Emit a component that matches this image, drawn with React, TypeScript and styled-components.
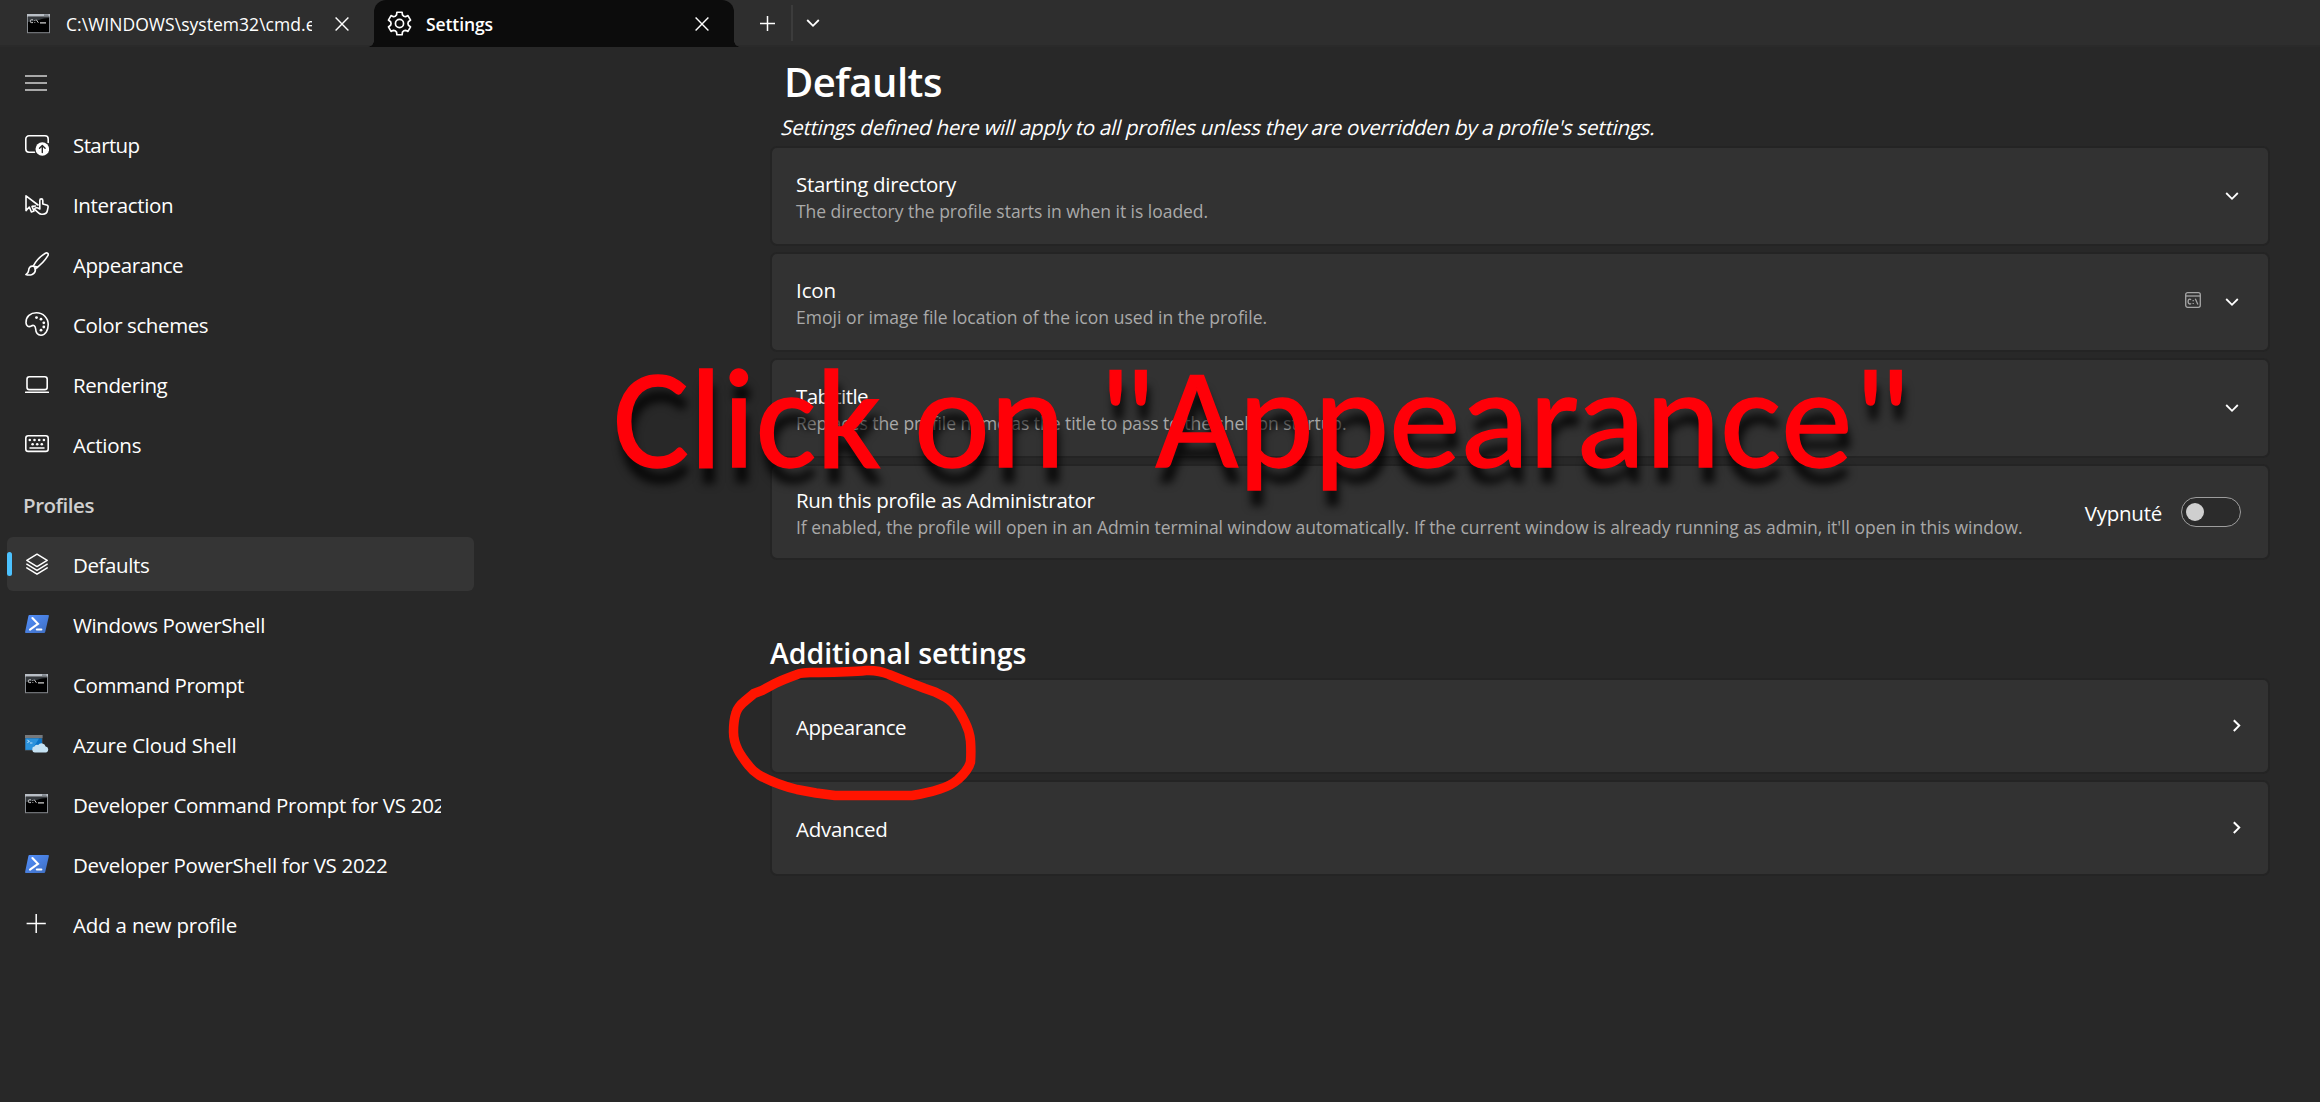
import React from "react";
import styled, { createGlobalStyle } from "styled-components";

const GlobalStyle = createGlobalStyle`
  * { box-sizing: border-box; }
  body {
    margin: 0;
    background: #282828;
    color: #ffffff;
    font-family: "Segoe UI", "Open Sans", "Noto Sans", sans-serif;
    overflow: hidden;
  }
  svg { display: block; flex: none; }
`;

const Window = styled.div`
  position: relative;
  display: flex;
  flex-direction: column;
  height: 1102px;
  background: #282828;
  overflow: hidden;
`;

/* ---------- title bar ---------- */

const TitleBar = styled.header`
  display: flex;
  height: 47px;
  background: #2e2e2e;
  border-bottom: 2px solid #2a2a2a;
`;

const Tab = styled.div<{ $active?: boolean }>`
  display: flex;
  align-items: center;
  height: 47px;
  width: ${(p) => (p.$active ? 360 : 374)}px;
  padding: 0 ${(p) => (p.$active ? "25px 0 13px" : "25px 0 27px")};
  border-radius: 12px 12px 0 0;
  background: ${(p) => (p.$active ? "#0c0c0c" : "transparent")};
  position: relative;
  &::before, &::after {
    content: "";
    display: ${(p) => (p.$active ? "block" : "none")};
    position: absolute;
    bottom: 0;
    width: 6px;
    height: 6px;
  }
  &::before { left: -6px; background: radial-gradient(circle at 0 0, transparent 5.5px, #0c0c0c 6px); }
  &::after { right: -6px; background: radial-gradient(circle at 100% 0, transparent 5.5px, #0c0c0c 6px); }
`;

const TabTitle = styled.span<{ $active?: boolean }>`
  flex: none;
  width: 246px;
  margin-left: ${(p) => (p.$active ? 14 : 15)}px;
  margin-right: 23px;
  padding-top: ${(p) => (p.$active ? 0 : 1)}px;
  overflow: hidden;
  white-space: nowrap;
  font-size: 17.5px;
  line-height: 30px;
  letter-spacing: ${(p) => (p.$active ? -0.1 : 0.036)}px;
  font-weight: ${(p) => (p.$active ? 600 : 400)};
`;

const TabActions = styled.div`
  display: flex;
  align-items: center;
  height: 46px;
  padding-left: 26px;
`;

const TabDivider = styled.span`
  width: 2px;
  height: 36px;
  margin: 0 11px 0 16px;
  background: #3c3c3c;
`;

/* ---------- layout ---------- */

const Body = styled.div`
  display: flex;
  flex: 1;
  min-height: 0;
`;

const Sidebar = styled.nav`
  display: flex;
  flex-direction: column;
  width: 770px;
  flex: none;
  padding: 9px 0 0 7px;
`;

const MenuButton = styled.div`
  display: flex;
  align-items: center;
  height: 54px;
  padding-left: 18px;
  margin-bottom: 7px;
`;

const NavItem = styled.div<{ $selected?: boolean }>`
  display: flex;
  align-items: center;
  position: relative;
  width: 467px;
  height: 54px;
  margin-bottom: 6px;
  padding-left: 18px;
  border-radius: 6px;
  background: ${(p) => (p.$selected ? "#353535" : "transparent")};
  &::before {
    content: "";
    display: ${(p) => (p.$selected ? "block" : "none")};
    position: absolute;
    left: 0;
    top: 15px;
    width: 5px;
    height: 24px;
    border-radius: 3px;
    background: #4cc2ff;
  }
`;

const NavLabel = styled.span<{ $ls: number }>`
  width: 368px;
  margin-left: 24px;
  padding-top: 2px;
  overflow: hidden;
  white-space: nowrap;
  font-size: 20.5px;
  line-height: 34px;
  letter-spacing: ${(p) => p.$ls}px;
`;

const NavHeading = styled.div`
  height: 54px;
  margin-bottom: 6px;
  padding: 1px 0 0 16px;
  color: #cfcfcf;
  font-size: 20.5px;
  font-weight: 600;
  line-height: 54px;
  letter-spacing: -0.45px;
`;

const Main = styled.main`
  width: 1500px;
  padding-top: 7px;
`;

const PageTitle = styled.h1`
  height: 54px;
  margin: 0;
  padding: 1px 0 0 14px;
  font-size: 40px;
  font-weight: 600;
  line-height: 54px;
  letter-spacing: -0.5px;
`;

const Subtitle = styled.p`
  width: max-content;
  margin: 0;
  padding-left: 12px;
  font-size: 20.5px;
  line-height: 38px;
  letter-spacing: -0.25px;
  white-space: nowrap;
  transform: skewX(-14deg);
`;

const SectionTitle = styled.h2`
  margin: 73px 0 5px;
  font-size: 28.5px;
  font-weight: 600;
  line-height: 40px;
  letter-spacing: -0.06px;
`;

const CardList = styled.section`
  display: flex;
  flex-direction: column;
  gap: 6px;
`;

const Card = styled.div<{ $h: number }>`
  display: flex;
  align-items: center;
  height: ${(p) => p.$h}px;
  padding: 0 27px 0 24px;
  border: 2px solid #242424;
  border-radius: 7px;
  background: #323232;
`;

const CardText = styled.div<{ $single?: boolean }>`
  flex: 1;
  padding-top: ${(p) => (p.$single ? 2 : 0)}px;
  white-space: nowrap;
`;

const CardTitle = styled.div<{ $ls: number }>`
  font-size: 20.5px;
  line-height: 30px;
  letter-spacing: ${(p) => p.$ls}px;
`;

const CardDescription = styled.div<{ $ls: number }>`
  color: #a9a9a9;
  font-size: 17.5px;
  line-height: 24px;
  letter-spacing: ${(p) => p.$ls}px;
`;

const CardTrailing = styled.div`
  display: flex;
  align-items: center;
  gap: 22px;
`;

const RaisedIcon = styled.span`
  padding-bottom: 4px;
`;

const ToggleLabel = styled.span`
  font-size: 20.5px;
  line-height: 30px;
  letter-spacing: -0.25px;
  padding-top: 2px;
  margin-right: -3px;
`;

const Toggle = styled.span`
  display: flex;
  align-items: center;
  width: 60px;
  height: 30px;
  padding-left: 4px;
  border: 1.5px solid #9d9d9d;
  border-radius: 15px;
  background: #2b2b2b;
`;

const ToggleKnob = styled.span`
  width: 18px;
  height: 18px;
  border-radius: 50%;
  background: #cfcfcf;
`;

/* ---------- annotations drawn over the window ---------- */

const Callout = styled.div`
  position: absolute;
  left: 613px;
  top: 338px;
  color: #ff0008;
  font-family: Calibri, Carlito, Lato, sans-serif;
  font-size: 143px;
  line-height: 160px;
  letter-spacing: 0.25px;
  white-space: nowrap;
  -webkit-text-stroke: 1.5px #ff0008;
  text-shadow: 3px 16px 8px rgba(0, 0, 0, 0.8);
`;

const Circle = styled.svg`
  position: absolute;
  left: 720px;
  top: 655px;
`;

/* ---------- icons ---------- */

const CloseIcon = () => (
  <svg width="14" height="14" viewBox="0 0 14 14" fill="none" stroke="#fff" strokeWidth="1.4">
    <path d="M.6.6 13.4 13.4M13.4.6.6 13.4" />
  </svg>
);

const PlusIcon = () => (
  <svg width="15" height="15" viewBox="0 0 15 15" stroke="#fff" strokeWidth="1.5">
    <path d="M7.5 0V15M0 7.5H15" />
  </svg>
);

const ChevronDown = () => (
  <svg width="18" height="18" viewBox="0 0 18 18" fill="none" stroke="#fff" strokeWidth="1.8">
    <path d="M3.2 6 9 11.8 14.8 6" />
  </svg>
);

const ChevronRight = () => (
  <svg width="18" height="18" viewBox="0 0 18 18" fill="none" stroke="#fff" strokeWidth="2">
    <path d="M10.8 3.2 16.2 8.6 10.8 14" />
  </svg>
);

const gearPath = (() => {
  const pts: string[] = [];
  const at = (deg: number, r: number) => {
    const a = (deg * Math.PI) / 180;
    return `${(12 + r * Math.cos(a)).toFixed(2)} ${(12 + r * Math.sin(a)).toFixed(2)}`;
  };
  for (let k = 0; k < 6; k++) {
    const c = -90 + k * 60;
    pts.push(at(c - 19, 8.7), at(c - 13, 11.1), at(c + 13, 11.1), at(c + 19, 8.7), at(c + 30, 8.1));
  }
  return `M${pts.join("L")}Z`;
})();

const GearIcon = () => (
  <svg width="25" height="25" viewBox="0 0 24 24" fill="none" stroke="#fff" strokeWidth="1.6" strokeLinejoin="round">
    <path d={gearPath} />
    <circle cx="12" cy="12" r="3.9" />
  </svg>
);

const HamburgerIcon = () => (
  <svg width="24" height="24" viewBox="0 0 24 24" stroke="#d2d2d2" strokeWidth="1.5">
    <path d="M0 5H22M0 12.1H22M0 19H22" />
  </svg>
);

const Glyph = ({ children }: { children: React.ReactNode }) => (
  <svg width="24" height="24" viewBox="0 0 24 24" fill="none" stroke="#fff" strokeWidth="1.6" strokeLinejoin="round" strokeLinecap="round">
    {children}
  </svg>
);

const StartupIcon = () => (
  <Glyph>
    <path d="M9.5 20.2H4A3.2 3.2 0 0 1 .8 17V7A3.2 3.2 0 0 1 4 3.8H20A3.2 3.2 0 0 1 23.2 7V10.5" />
    <circle cx="17.3" cy="17" r="6.8" fill="#fff" stroke="none" />
    <path d="M17.3 20.6V13.6M14.5 16.3 17.3 13.5 20.1 16.3" stroke="#282828" strokeWidth="1.4" />
  </Glyph>
);

const InteractionIcon = () => (
  <Glyph>
    <path d="M13 13 1 3.8V18.6L4.3 15 6.4 20 9 19 7 14.4 10.5 14" />
    <path d="M14.8 14.4V8.4A1.5 1.5 0 0 1 17.8 8.4V11.9L21.6 13A1.8 1.8 0 0 1 23.1 15.1L22.4 18.5A4.6 4.6 0 0 1 17.8 22.2H16.4A4 4 0 0 1 13.8 21.2L9.6 17.4C9.6 15.4 11.8 15 14.8 17Z" />
  </Glyph>
);

const BrushIcon = () => (
  <Glyph>
    <path d="M8.2 14.2C10.5 9.6 15.6 4.2 20.4 1.2 22.2.2 24 1.8 22.9 3.6 20 8.4 14.6 13.8 10 17" />
    <path d="M8.2 14.2C5 13.8 3.8 16 3.6 18.6 3.5 20.4 2.4 21.6.9 22.6 4.8 23.8 10.6 22.6 10.4 17.4 10.3 15.6 9.4 14.4 8.2 14.2ZM8.6 14.2Q12 14.4 12.4 15.4" />
  </Glyph>
);

const PaletteIcon = () => (
  <Glyph>
    <path d="M1 10.6C.8 4.6 5.6.8 11.4.8 18.2.8 23.2 6 23.2 12.4 23.2 18 20.6 23.2 16 23.2 12.2 23.2 10.8 20 10.6 16.8 10.4 13.6 8.4 12.6 6.2 14 3.4 15.6 1.1 13.6 1 10.6Z" />
    <g fill="#fff" stroke="none">
      <circle cx="11.5" cy="5.6" r="1.4" />
      <circle cx="16" cy="7.2" r="1.4" />
      <circle cx="18.8" cy="10.8" r="1.4" />
      <circle cx="18.8" cy="15" r="1.4" />
      <circle cx="16" cy="18.2" r="1.4" />
    </g>
  </Glyph>
);

const LaptopIcon = () => (
  <Glyph>
    <rect x="2" y="4.8" width="20.2" height="12.8" rx="2.4" />
    <path d="M.6 20.3H23.4" />
  </Glyph>
);

const KeyboardIcon = () => (
  <Glyph>
    <rect x=".8" y="3.8" width="22.4" height="15.6" rx="2.4" />
    <path d="M5 16H19" strokeWidth="1.5" />
    <g fill="#fff" stroke="none">
      {[4.8, 9.5, 14.2, 18.9].map((x) => <circle key={x} cx={x} cy="8" r="1.3" />)}
      {[7.6, 12.2, 16.8].map((x) => <circle key={x} cx={x} cy="12.2" r="1.3" />)}
    </g>
  </Glyph>
);

const LayersIcon = () => (
  <Glyph>
    <path d="M12 2.2 22.2 8.4 12 14.6 1.8 8.4Z" strokeWidth="1.5" />
    <path d="M1.8 12.2 12 18.4 22.2 12.2M1.8 15.8 12 22.2 22.2 15.8" strokeWidth="1.5" />
  </Glyph>
);

const AddIcon = () => (
  <Glyph>
    <path d="M11.2 1.9V21.1M1.6 11.5H20.8" strokeWidth="1.5" strokeLinecap="butt" />
  </Glyph>
);

const PowerShellIcon = () => (
  <svg width="24" height="24" viewBox="0 0 24 24" fill="none">
    <defs>
      <linearGradient id="ps" x1="0" y1="0" x2="1" y2="1">
        <stop offset="0" stopColor="#5391fe" />
        <stop offset="1" stopColor="#3e6dbf" />
      </linearGradient>
    </defs>
    <path d="M4.4 3H23a.9.9 0 0 1 .9 1.1L20.2 20a1.3 1.3 0 0 1-1.2 1H1A.9.9 0 0 1 .1 19.9L3.4 3.9A1.2 1.2 0 0 1 4.4 3Z" fill="url(#ps)" />
    <path d="M7.4 6 13 11.8 5 17.6" stroke="#fff" strokeWidth="2.1" strokeLinecap="round" />
    <path d="M11.8 17.6H16.4" stroke="#fff" strokeWidth="2" strokeLinecap="round" />
  </svg>
);

const CmdIcon = () => (
  <svg width="24" height="24" viewBox="0 0 24 24" fill="none">
    <rect x=".5" y="2.5" width="22" height="18.2" fill="#000" stroke="#85898e" />
    <path d="M1 9V5H22V6C14 6 12 9 1 10Z" fill="#34383c" />
    <rect x="0" y="2" width="23" height="2.6" fill="#b9bfc6" />
    <rect x="17" y="2.6" width="4.5" height="1" fill="#5a6068" />
    <path d="M6 7.8H4.2Q3.4 7.8 3.4 8.6V9.8Q3.4 10.6 4.2 10.6H6M7.8 8V8.8M7.8 10V10.8M9.2 7.6 11.4 10.8" stroke="#c8c8c8" strokeWidth="1" />
    <path d="M13 10.9H19" stroke="#f0f0f0" strokeWidth="1.1" />
  </svg>
);

const AzureIcon = () => (
  <svg width="24" height="24" viewBox="0 0 24 24" fill="none">
    <rect x="0" y="3" width="17.5" height="15.5" fill="#4d5a66" />
    <rect x=".6" y="6.4" width="16.3" height="11.4" fill="#0a74c8" />
    <path d="M.6 6.4H14L7 17.8H.6Z" fill="#2b93dd" />
    <rect x="0" y="3" width="17.5" height="3" fill="#77797c" />
    <path d="M2.4 8.2 4.4 9.4 2.4 10.6M5 11H7.4" stroke="#cfe8fb" strokeWidth=".9" />
    <path d="M9.8 20.4A3.1 3.1 0 0 1 9.6 14.3 3 3 0 0 1 13.2 13.1 4.1 4.1 0 0 1 20.6 14.6 3 3 0 0 1 21.3 20.4Z" fill="#c5e2f3" />
  </svg>
);

const ConsoleIcon = () => (
  <svg width="16" height="16" viewBox="0 0 16 16" fill="none" stroke="#a6a6a6" strokeWidth="1.3">
    <rect x=".7" y=".7" width="14.6" height="14.6" rx="2" />
    <path d="M.7 4H15.3" />
    <path d="M6 7.8Q5.6 7.2 4.7 7.2 3.1 7.2 3.1 9.6 3.1 12 4.7 12 5.6 12 6 11.4" />
    <path d="M8.2 8V9.2M8.2 10.9V12.1M10.3 6.8 12.9 12.4" />
  </svg>
);

/* ---------- data ---------- */

type NavEntry = { label: string; ls: number; icon: React.ReactNode; selected?: boolean };

const general: NavEntry[] = [
  { label: "Startup", ls: -0.6, icon: <StartupIcon /> },
  { label: "Interaction", ls: -0.36, icon: <InteractionIcon /> },
  { label: "Appearance", ls: -0.45, icon: <BrushIcon /> },
  { label: "Color schemes", ls: -0.4, icon: <PaletteIcon /> },
  { label: "Rendering", ls: -0.42, icon: <LaptopIcon /> },
  { label: "Actions", ls: -0.25, icon: <KeyboardIcon /> },
];

const profiles: NavEntry[] = [
  { label: "Defaults", ls: -0.4, icon: <LayersIcon />, selected: true },
  { label: "Windows PowerShell", ls: -0.37, icon: <PowerShellIcon /> },
  { label: "Command Prompt", ls: -0.43, icon: <CmdIcon /> },
  { label: "Azure Cloud Shell", ls: -0.2, icon: <AzureIcon /> },
  { label: "Developer Command Prompt for VS 2022", ls: -0.3, icon: <CmdIcon /> },
  { label: "Developer PowerShell for VS 2022", ls: -0.285, icon: <PowerShellIcon /> },
  { label: "Add a new profile", ls: -0.2, icon: <AddIcon /> },
];

type Setting = { title: string; ls: number; text: string; textLs: number; height: number; trailing: React.ReactNode };

const settings: Setting[] = [
  {
    title: "Starting directory", ls: -0.31, height: 100, textLs: -0.035,
    text: "The directory the profile starts in when it is loaded.",
    trailing: <ChevronDown />,
  },
  {
    title: "Icon", ls: -0.1, height: 100, textLs: 0.045,
    text: "Emoji or image file location of the icon used in the profile.",
    trailing: <><RaisedIcon><ConsoleIcon /></RaisedIcon><ChevronDown /></>,
  },
  {
    title: "Tab title", ls: -0.55, height: 100, textLs: -0.041,
    text: "Replaces the profile name as the title to pass to the shell on startup.",
    trailing: <ChevronDown />,
  },
  {
    title: "Run this profile as Administrator", ls: -0.33, height: 96, textLs: -0.017,
    text: "If enabled, the profile will open in an Admin terminal window automatically. If the current window is already running as admin, it'll open in this window.",
    trailing: <><ToggleLabel>Vypnuté</ToggleLabel><Toggle><ToggleKnob /></Toggle></>,
  },
];

const NavRow = ({ entry }: { entry: NavEntry }) => (
  <NavItem $selected={entry.selected}>
    {entry.icon}
    <NavLabel $ls={entry.ls}>{entry.label}</NavLabel>
  </NavItem>
);

export default function App() {
  return (
    <Window>
      <GlobalStyle />
      <TitleBar>
        <Tab>
          <CmdIcon />
          <TabTitle>C:\WINDOWS\system32\cmd.exe</TabTitle>
          <CloseIcon />
        </Tab>
        <Tab $active>
          <GearIcon />
          <TabTitle $active>Settings</TabTitle>
          <CloseIcon />
        </Tab>
        <TabActions>
          <PlusIcon />
          <TabDivider />
          <ChevronDown />
        </TabActions>
      </TitleBar>
      <Body>
        <Sidebar>
          <MenuButton><HamburgerIcon /></MenuButton>
          {general.map((e) => <NavRow key={e.label} entry={e} />)}
          <NavHeading>Profiles</NavHeading>
          {profiles.map((e) => <NavRow key={e.label} entry={e} />)}
        </Sidebar>
        <Main>
          <PageTitle>Defaults</PageTitle>
          <Subtitle>
            Settings defined here will apply to all profiles unless they are overridden by a profile's settings.
          </Subtitle>
          <CardList>
            {settings.map((s) => (
              <Card key={s.title} $h={s.height}>
                <CardText>
                  <CardTitle $ls={s.ls}>{s.title}</CardTitle>
                  <CardDescription $ls={s.textLs}>{s.text}</CardDescription>
                </CardText>
                <CardTrailing>{s.trailing}</CardTrailing>
              </Card>
            ))}
          </CardList>
          <SectionTitle>Additional settings</SectionTitle>
          <CardList>
            <Card $h={96}>
              <CardText $single><CardTitle $ls={-0.45}>Appearance</CardTitle></CardText>
              <ChevronRight />
            </Card>
            <Card $h={96}>
              <CardText $single><CardTitle $ls={-0.26}>Advanced</CardTitle></CardText>
              <ChevronRight />
            </Card>
          </CardList>
        </Main>
      </Body>
      <Callout>Click on "Appearance"</Callout>
      <Circle width="270" height="155" viewBox="720 655 270 155" fill="none" stroke="#ff1400" strokeWidth="9.5" strokeLinecap="round" strokeLinejoin="round">
        <path d="M866 670.5C848 672.5 829 672.3 810 672.5 804 672.5 800 673 797 674.5 789 677.5 782 680 775 683.5L762 690.5 754 693.5 745 701C740 705 737.5 708 736 713 734 719 733.5 726 733.5 732 733.5 739 735 744 738 750 741 756 745 761 749 766 752 770 755 772.5 759 775 770 781 783 786 797 789.5L816 793 835 795.5H912C922 794 931 792 940 789 948 786.5 954 783 958 779.5 964 774 969 768 970.5 762 971 755 971 748 970.5 741 970 735 968 728 965 722 962 716 959 710 955 705.5 951 700.5 947 697.5 942 695.5L935 692 925 688.5 904 680.5 889 674.5C882 671.5 876 670 866 670.5Z" />
      </Circle>
    </Window>
  );
}
